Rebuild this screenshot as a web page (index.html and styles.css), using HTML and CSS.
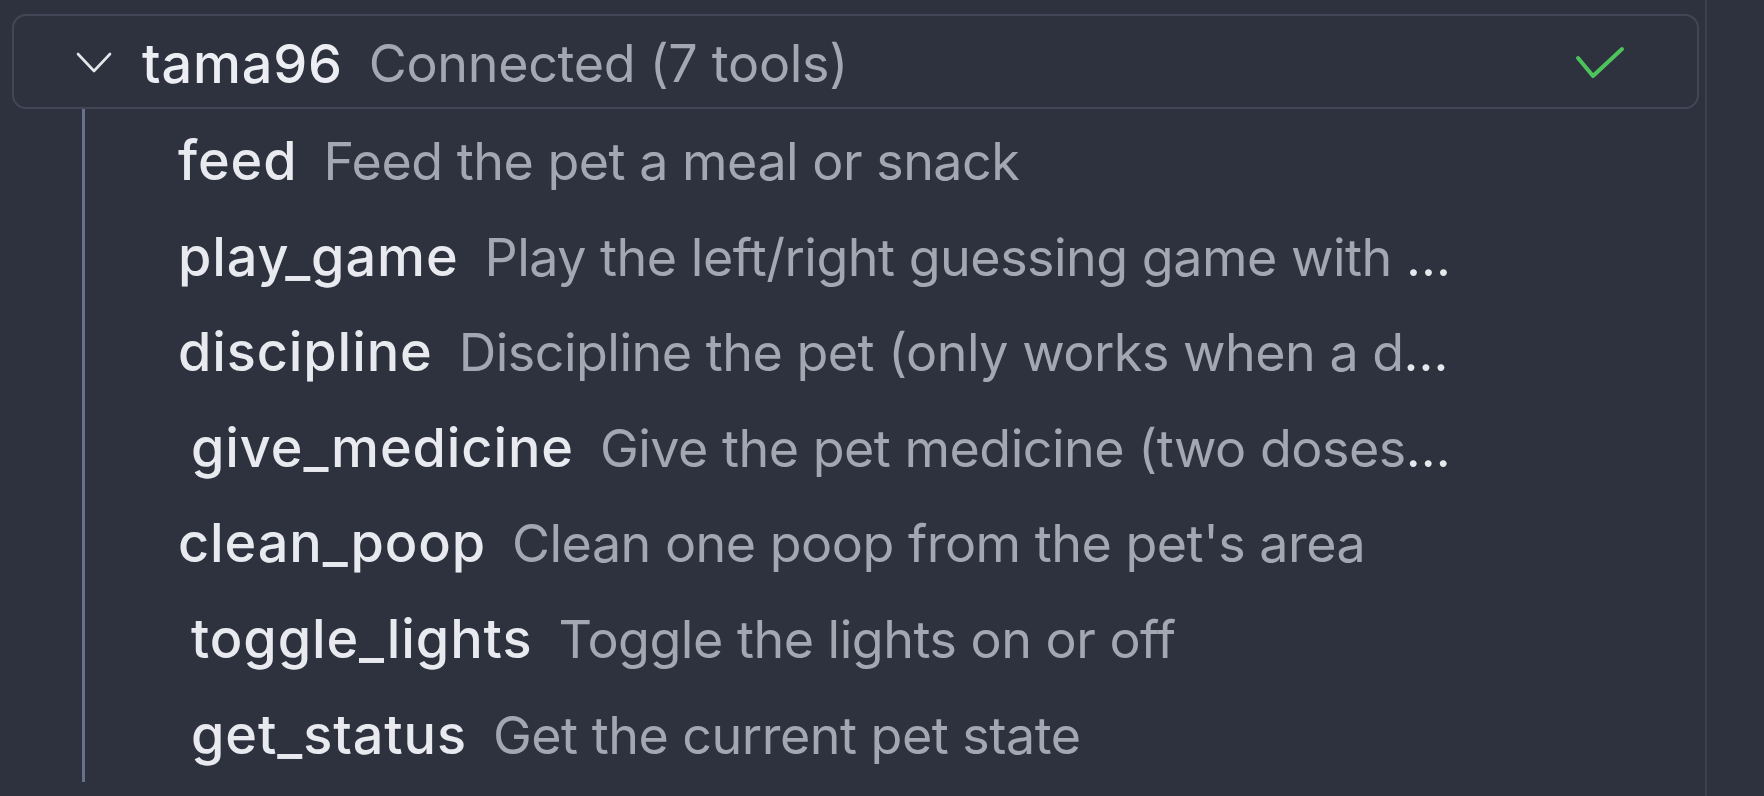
FILE: index.html
```html
<!DOCTYPE html>
<html lang="en">
<head>
<meta charset="utf-8">
<title>MCP servers</title>
<link rel="stylesheet" href="styles.css">
</head>
<body>
<div class="app">
  <section class="panel">
    <div class="server">
      <div class="server-header">
        <svg class="chevron" width="36" height="22" viewBox="0 0 36 22" aria-hidden="true">
          <path d="M2 2 L18 19 L34 2" fill="none" stroke="#e4e6ec" stroke-width="2.6" stroke-linecap="round" stroke-linejoin="round"/>
        </svg>
        <span class="server-name">tama96</span>
        <span class="server-status">Connected (7 tools)</span>
        <span class="spacer"></span>
        <svg class="check" width="50" height="34" viewBox="0 0 50 34" aria-hidden="true">
          <path d="M3 12 L18 30 L47 3" fill="none" stroke="#4cc45b" stroke-width="4" stroke-linecap="round" stroke-linejoin="round"/>
        </svg>
      </div>
      <div class="tools">
        <div class="tool"><span class="tool-name">feed</span><span class="tool-desc">Feed the pet a meal or snack</span></div>
        <div class="tool"><span class="tool-name">play_game</span><span class="tool-desc">Play the left/right guessing game with the pet to raise happiness</span></div>
        <div class="tool"><span class="tool-name">discipline</span><span class="tool-desc">Discipline the pet (only works when a discipline call is pending)</span></div>
        <div class="tool tool-shift"><span class="tool-name">give_medicine</span><span class="tool-desc">Give the pet medicine (two doses cure sickness)</span></div>
        <div class="tool"><span class="tool-name">clean_poop</span><span class="tool-desc">Clean one poop from the pet's area</span></div>
        <div class="tool tool-shift"><span class="tool-name">toggle_lights</span><span class="tool-desc">Toggle the lights on or off</span></div>
        <div class="tool tool-shift"><span class="tool-name">get_status</span><span class="tool-desc">Get the current pet state</span></div>
      </div>
    </div>
  </section>
  <aside class="side"></aside>
</div>
</body>
</html>
```

FILE: styles.css
```css
* { box-sizing: border-box; }

html, body {
  margin: 0;
  height: 100%;
  background: #2e323e;
}

body {
  font-family: Inter, "Noto Sans", "Liberation Sans", sans-serif;
  color: #e6e8ee;
  overflow: hidden;
}

.app {
  display: flex;
  height: 796px;
}

.panel {
  flex: 0 0 1707px;
  border-right: 2px solid #3b404d;
  padding: 14px 6px 0 12px;
}

.side {
  flex: 1;
}

.server-header {
  display: flex;
  align-items: center;
  height: 95px;
  border: 2px solid #424757;
  border-radius: 14px;
  padding-top: 3px;
  padding-left: 62px;
  padding-right: 72px;
  font-size: 52px;
  white-space: nowrap;
}

.chevron {
  flex: none;
  margin-right: 30px;
}

.server-name {
  font-size: 54px;
  font-weight: 500;
  color: #eceef3;
  letter-spacing: 0.8px;
  margin-right: 26px;
}

.server-status {
  color: #a3a7b2;
  letter-spacing: -0.3px;
}

.spacer { flex: 1; }

.check { flex: none; }

.tools {
  margin-left: 70px;
  border-left: 3px solid #68718b;
  padding-top: 4px;
  padding-left: 93px;
}

.tool {
  height: 95.6px;
  line-height: 95.6px;
  width: 1280px;
  font-size: 52px;
  white-space: nowrap;
  overflow: hidden;
  text-overflow: ellipsis;
  color: #e6e8ee;
}

.tool-shift {
  padding-left: 13px;
}

.tool-name {
  font-size: 54px;
  font-weight: 500;
  color: #e8eaf0;
  letter-spacing: 0.9px;
  margin-right: 26px;
}

.tool-desc {
  color: #a3a7b2;
  letter-spacing: -0.5px;
}
```
